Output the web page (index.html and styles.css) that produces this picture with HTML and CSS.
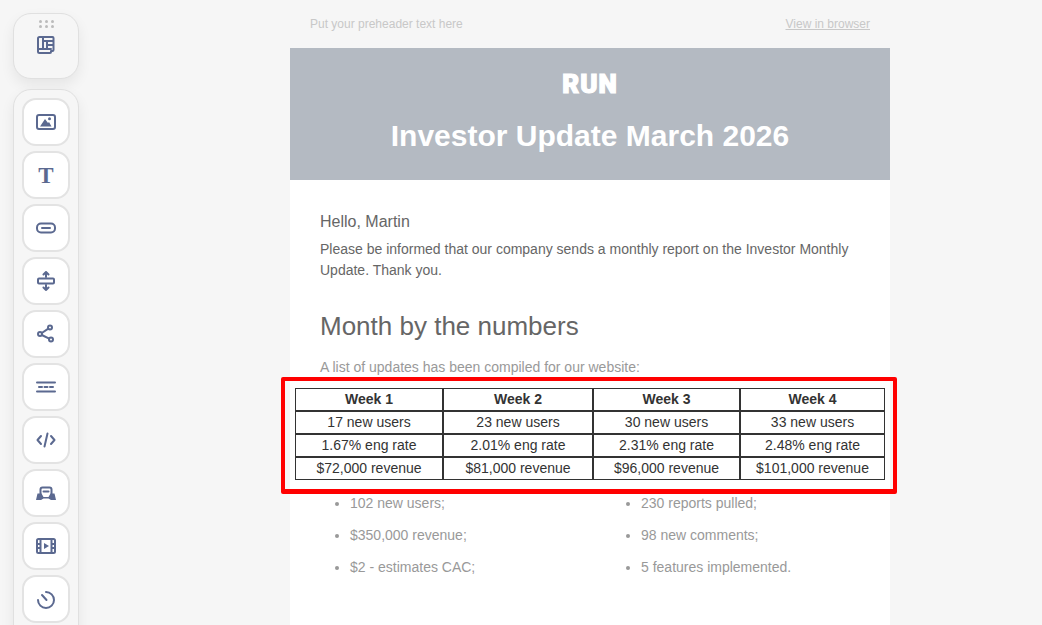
FILE: index.html
```html
<!DOCTYPE html>
<html lang="en">
<head>
  <meta charset="UTF-8" />
  <title>Investor Update March 2026</title>
  <link rel="stylesheet" href="styles.css">
</head>
<body>
  <aside class="tools">
    <div class="tool-head">
      <div class="grip">
        <span></span><span></span><span></span>
        <span></span><span></span><span></span>
      </div>
      <svg class="icon" viewBox="1 1 18 18"><path d="M2 3.500a1.500 1.500 0 0 1 1.500-1.500h13a1 1 0 0 1 1 1v12a1 1 0 0 1-1 1h-1.500v1a1 1 0 0 1-1 1h-10.500a1.500 1.500 0 0 1-1.500-1.500zM2 14h13M7 2v12M7 6h10.500M11 6v8M11 10h6.500"/></svg>
    </div>
    <div class="tool-list">
      <button class="tool"><svg class="icon" viewBox="0 0 20 20"><rect x="1" y="3" width="18" height="14" rx="2"/><path class="solid" d="M4 14.500l5-7.500 3 4 1-1 2.500 4.500z"/><circle class="solid" cx="13.500" cy="6.800" r="1.500"/></svg></button>
      <button class="tool"><span class="t-glyph">T</span></button>
      <button class="tool"><svg class="icon" viewBox="0 0 20 20"><rect x="1" y="5.500" width="18" height="9" rx="4"/><path d="M6 10h8"/></svg></button>
      <button class="tool"><svg class="icon" viewBox="0 0 20 20"><rect x="2" y="7.500" width="16" height="5" rx="1"/><path d="M10 1v5M7.500 3.500L10 1l2.500 2.500M10 14v5M7.500 16.500L10 19l2.500-2.500"/></svg></button>
      <button class="tool"><svg class="icon" viewBox="0 0 20 20"><circle cx="14" cy="3.500" r="2"/><circle cx="4" cy="10" r="2"/><circle cx="15" cy="15.500" r="2"/><path d="M12.300 4.600L5.800 9M5.800 11l7.400 3.600"/></svg></button>
      <button class="tool"><svg class="icon" viewBox="0 0 20 20"><path d="M1 5.500h18M1 14.500h18M3 10h3M8.500 10h3M14 10h3"/></svg></button>
      <button class="tool"><svg class="icon" viewBox="0 0 20 20"><path d="M5 6l-3.500 4L5 14M15 6l3.500 4-3.500 4M11.500 3.500l-3 13"/></svg></button>
      <button class="tool"><svg class="icon" viewBox="0 0 20 20"><path d="M4.500 12V6.500a2 2 0 0 1 2-2h7a2 2 0 0 1 2 2V12M7.500 8.500h5"/><path class="solid" d="M0 17l1.500-6.500h4l2 3.500h5l2-3.500h4L20 17h-5l-2.500-1.500h-5L5 17z"/></svg></button>
      <button class="tool"><svg class="icon" viewBox="0 0 20 20"><rect x="1" y="3" width="18" height="14" rx="1.500"/><path d="M4.500 3v14M15.500 3v14M1 8h3.500M1 12h3.500M15.500 8H19M15.500 12H19"/><path class="solid" d="M8 7l5 3-5 3z"/></svg></button>
      <button class="tool"><svg class="icon" viewBox="0 0 20 20"><path d="M10 3a8 8 0 1 1-8 8M6 6l4.500 5"/></svg></button>
    </div>
  </aside>

  <main class="email">
    <div class="preheader">
      <span>Put your preheader text here</span>
      <a href="#">View in browser</a>
    </div>
    <header class="banner">
      <div class="logo">RUN</div>
      <h1>Investor Update March 2026</h1>
    </header>
    <section class="content">
      <p class="hello">Hello, Martin</p>
      <p class="intro">Please be informed that our company sends a monthly report on the Investor Monthly Update. Thank you.</p>
      <h2>Month by the numbers</h2>
      <p class="note">A list of updates has been compiled for our website:</p>
      <div class="table-wrap">
        <table class="weeks">
          <tr><th>Week 1</th><th>Week 2</th><th>Week 3</th><th>Week 4</th></tr>
          <tr><td>17 new users</td><td>23 new users</td><td>30 new users</td><td>33 new users</td></tr>
          <tr><td>1.67% eng rate</td><td>2.01% eng rate</td><td>2.31% eng rate</td><td>2.48% eng rate</td></tr>
          <tr><td>$72,000 revenue</td><td>$81,000 revenue</td><td>$96,000 revenue</td><td>$101,000 revenue</td></tr>
        </table>
        <div class="highlight"></div>
      </div>
      <div class="lists">
        <ul>
          <li>102 new users;</li>
          <li>$350,000 revenue;</li>
          <li>$2 - estimates CAC;</li>
        </ul>
        <ul>
          <li>230 reports pulled;</li>
          <li>98 new comments;</li>
          <li>5 features implemented.</li>
        </ul>
      </div>
    </section>
  </main>
</body>
</html>
```
FILE: styles.css
```css
html, body {
  height: 100%;
  overflow: hidden;
}
body {
  margin: 0;
  background-color: #f6f6f6;
  font-family: "Liberation Sans", Arial, sans-serif;
  color: #666;
  display: flex;
}
.tools {
  width: 290px;
  height: 100%;
  flex: none;
  padding: 13px 0 0 13px;
  box-sizing: border-box;
  overflow: hidden;
}
.tool-head {
  width: 66px;
  height: 66px;
  box-sizing: border-box;
  border: 1px solid #e0e0e0;
  border-radius: 18px;
  background: #f6f6f6;
  box-shadow: 0 6px 14px rgba(0, 0, 0, 0.07);
  display: flex;
  flex-direction: column;
  align-items: center;
  padding-top: 6px;
}
.grip {
  display: grid;
  grid-template-columns: repeat(3, 3px);
  gap: 2px 3px;
  margin-bottom: 8px;
}
.grip span {
  width: 3px;
  height: 3px;
  border-radius: 50%;
  background: #bbb;
}
.icon {
  width: 20px;
  height: 20px;
  fill: none;
  stroke: #5b6990;
  stroke-width: 2;
  stroke-linecap: round;
  stroke-linejoin: round;
}
.icon .solid {
  fill: #5b6990;
  stroke: none;
}
.tool-head .icon {
  width: 18px;
  height: 18px;
}
.tool-list {
  width: 66px;
  box-sizing: border-box;
  margin-top: 10px;
  padding: 8px 0 0;
  height: 600px;
  border: 1px solid #e0e0e0;
  border-radius: 18px;
  background: #f6f6f6;
  box-shadow: 0 6px 14px rgba(0, 0, 0, 0.07);
  display: flex;
  flex-direction: column;
  align-items: center;
  gap: 5px;
}
.tool {
  width: 48px;
  height: 48px;
  flex: none;
  padding: 0;
  box-sizing: border-box;
  border: 2px solid #e3e3e3;
  border-radius: 14px;
  background: #fff;
  display: flex;
  align-items: center;
  justify-content: center;
}
.t-glyph {
  font-family: "Liberation Serif", serif;
  font-weight: 700;
  font-size: 23px;
  line-height: 1;
  color: #5b6990;
}
.email {
  width: 600px;
  height: 100%;
  flex: none;
  display: flex;
  flex-direction: column;
}
.preheader {
  height: 48px;
  flex: none;
  box-sizing: border-box;
  padding: 16px 20px 0;
  display: flex;
  justify-content: space-between;
  font-size: 12px;
  line-height: 16px;
  color: #c8c8c8;
}
.preheader a {
  color: #c8c8c8;
}
.banner {
  height: 132px;
  flex: none;
  box-sizing: border-box;
  padding-top: 20px;
  background: #b4bac2;
  color: #fff;
  text-align: center;
}
.logo {
  display: inline-block;
  font-family: Roboto, "Liberation Sans", sans-serif;
  font-size: 26px;
  line-height: 32px;
  font-weight: 900;
  letter-spacing: 1px;
  -webkit-text-stroke: 1.2px #fff;
}
.banner h1 {
  margin: 18px 0 0;
  font-size: 30px;
  line-height: 36px;
  font-weight: 700;
}
.content {
  flex: 1;
  background: #fff;
  padding-top: 32px;
}
.hello {
  margin: 0 30px 8px;
  font-size: 16px;
  line-height: 19px;
}
.intro {
  margin: 0 30px;
  font-size: 14px;
  line-height: 21px;
}
.content h2 {
  margin: 30px 30px 0;
  font-size: 26px;
  line-height: 31px;
  font-weight: 400;
}
.note {
  margin: 15px 30px 0;
  font-size: 14px;
  line-height: 21px;
  color: #999;
}
.table-wrap {
  position: relative;
  margin: 10px 5px 0;
}
.weeks {
  width: 590px;
  border-collapse: separate;
  border-spacing: 0;
  table-layout: fixed;
  font-size: 14px;
  color: #333;
  text-align: center;
}
.weeks th, .weeks td {
  height: 23px;
  box-sizing: border-box;
  padding: 0 0 2px;
  border: 1px solid #333;
}
.weeks th:nth-child(1) { width: 148px; }
.weeks th:nth-child(2) { width: 150px; }
.weeks th:nth-child(3) { width: 147px; }
.weeks th:nth-child(4) { width: 145px; }
.highlight {
  position: absolute;
  left: -14px;
  right: -12px;
  top: -11px;
  bottom: -14px;
  border: 4px solid #f00;
  border-bottom-width: 5px;
  border-radius: 2px;
}
.lists {
  display: flex;
  margin-top: 13px;
  color: #999;
  font-size: 14px;
}
.lists ul {
  margin: 0;
  padding: 0 0 0 60px;
  width: 291px;
  box-sizing: border-box;
}
.lists li {
  line-height: 21px;
  margin-bottom: 11px;
}
```
